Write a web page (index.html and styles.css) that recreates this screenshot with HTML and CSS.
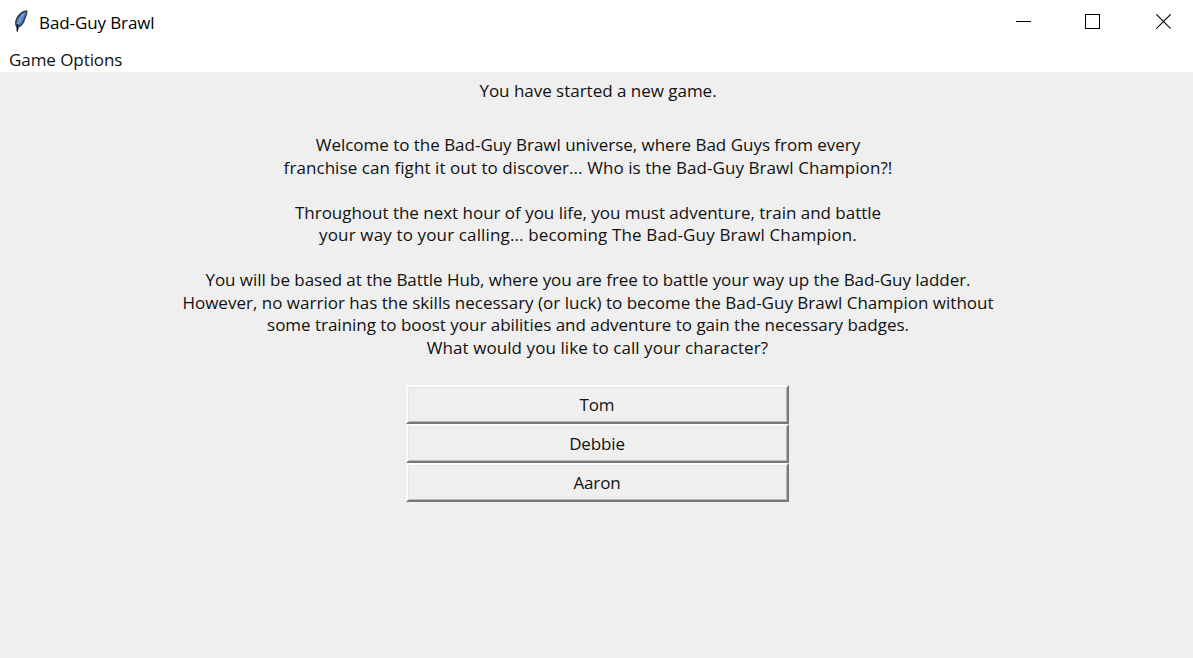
FILE: index.html
```html
<!DOCTYPE html>
<html lang="en">
<head>
<meta charset="utf-8">
<title>Bad-Guy Brawl</title>
<link rel="stylesheet" href="styles.css">
</head>
<body>
<header class="titlebar">
  <svg class="feather" width="16" height="24" viewBox="0 0 16 24">
    <path d="M14.3 1.2C10 1 5.5 4.5 3.3 9C1.6 12.8 1.6 16.4 3.4 18.4L4.3 22.8L5.8 18.6C9 17.4 11.3 14 12.5 9.5C13.8 7 14.8 3.5 14.3 1.2Z" fill="#3a4148"/>
    <path d="M12.6 3C9 4 5.6 7.6 4 11.8C3.2 14.6 3.4 16.4 4.6 17.2C7.8 16 9.8 13 10.9 9C12 7 13 4.8 12.6 3Z" fill="#4f86cc"/>
    <path d="M11 4.5C8 8 5.5 12.5 4.4 17.5" stroke="#8fb9ea" stroke-width="1" fill="none"/>
    <path d="M4.7 15L4.3 22.5" stroke="#111" stroke-width="1.5" fill="none"/>
  </svg>
  <h1 class="title">Bad-Guy Brawl</h1>
  <div class="controls">
    <svg width="16" height="16" viewBox="0 0 16 16" shape-rendering="crispEdges"><path d="M0 7.5H15" stroke="#000"/></svg>
    <svg width="16" height="16" viewBox="0 0 16 16" shape-rendering="crispEdges"><path d="M.5.5H14.5V14.5H.5Z" stroke="#000" fill="none"/></svg>
    <svg width="16" height="16" viewBox="0 0 16 16"><path d="M.3.3L14.7 14.7M14.7.3L.3 14.7" stroke="#000" stroke-width="1.1"/></svg>
  </div>
</header>
<nav class="menubar"><span class="menu">Game Options</span></nav>
<main class="content">
  <p class="status">You have started a new game.</p>
  <div class="story">
    <p class="line">Welcome to the Bad-Guy Brawl universe, where Bad Guys from every</p>
    <p class="line wide">franchise can fight it out to discover... Who is the Bad-Guy Brawl Champion?!</p>
    <p class="line gap">Throughout the next hour of you life, you must adventure, train and battle</p>
    <p class="line wider">your way to your calling... becoming The Bad-Guy Brawl Champion.</p>
    <p class="line gap tight">You will be based at the Battle Hub, where you are free to battle your way up the Bad-Guy ladder.</p>
    <p class="line even">However, no warrior has the skills necessary (or luck) to become the Bad-Guy Brawl Champion without</p>
    <p class="line">some training to boost your abilities and adventure to gain the necessary badges.</p>
  </div>
  <p class="question wide">What would you like to call your character?</p>
  <div class="choices">
    <button class="choice">Tom</button>
    <button class="choice">Debbie</button>
    <button class="choice">Aaron</button>
  </div>
</main>
</body>
</html>
```
FILE: styles.css
```css
* { box-sizing: border-box; margin: 0; padding: 0; }
body {
  width: 1193px; height: 658px; overflow: hidden;
  display: flex; flex-direction: column;
  background: #fff; color: #111;
  font: 17px/22.5px "Open Sans", "Noto Sans", sans-serif;
}
.titlebar { display: flex; align-items: center; height: 45px; padding: 0 21px 2px 13px; color: #000; }
.feather { margin-right: 10px; margin-top: -1px; }
.title { font-size: 17px; font-weight: 400; letter-spacing: -.1px; margin-top: 3px; }
.controls { display: flex; gap: 54px; margin-left: auto; }
.controls svg:nth-child(1) { margin-right: -1px; }
.controls svg:nth-child(2) { margin-right: 1px; }
.menubar { height: 27px; padding: 4px 9px 0; letter-spacing: -.07px; }
.content { flex: 1; background: #efefef; padding-top: 8px; display: flex; flex-direction: column; align-items: center; text-align: center; }
.status { margin-left: 3px; letter-spacing: -.02px; }
.story { margin: 31.7px 0 0 -17px; white-space: nowrap; letter-spacing: -.02px; }
.gap { margin-top: 22.5px; }
.wide { letter-spacing: .07px; }
.wider { letter-spacing: .14px; }
.tight { letter-spacing: -.045px; }
.even { letter-spacing: .01px; }
.question { margin-left: 2px; }
.choices { width: 383px; margin: 26.3px 0 0 1px; display: flex; flex-direction: column; }
.choice {
  height: 39px; font: inherit; color: inherit; letter-spacing: -.15px;
  background: #efefef; border: solid; border-width: 2px;
  border-color: #fbfbfb #787878 #787878 #fbfbfb;
  box-shadow: inset 1px 1px #e6e6e6, inset -1px -1px #b8b8b8;
}
```
